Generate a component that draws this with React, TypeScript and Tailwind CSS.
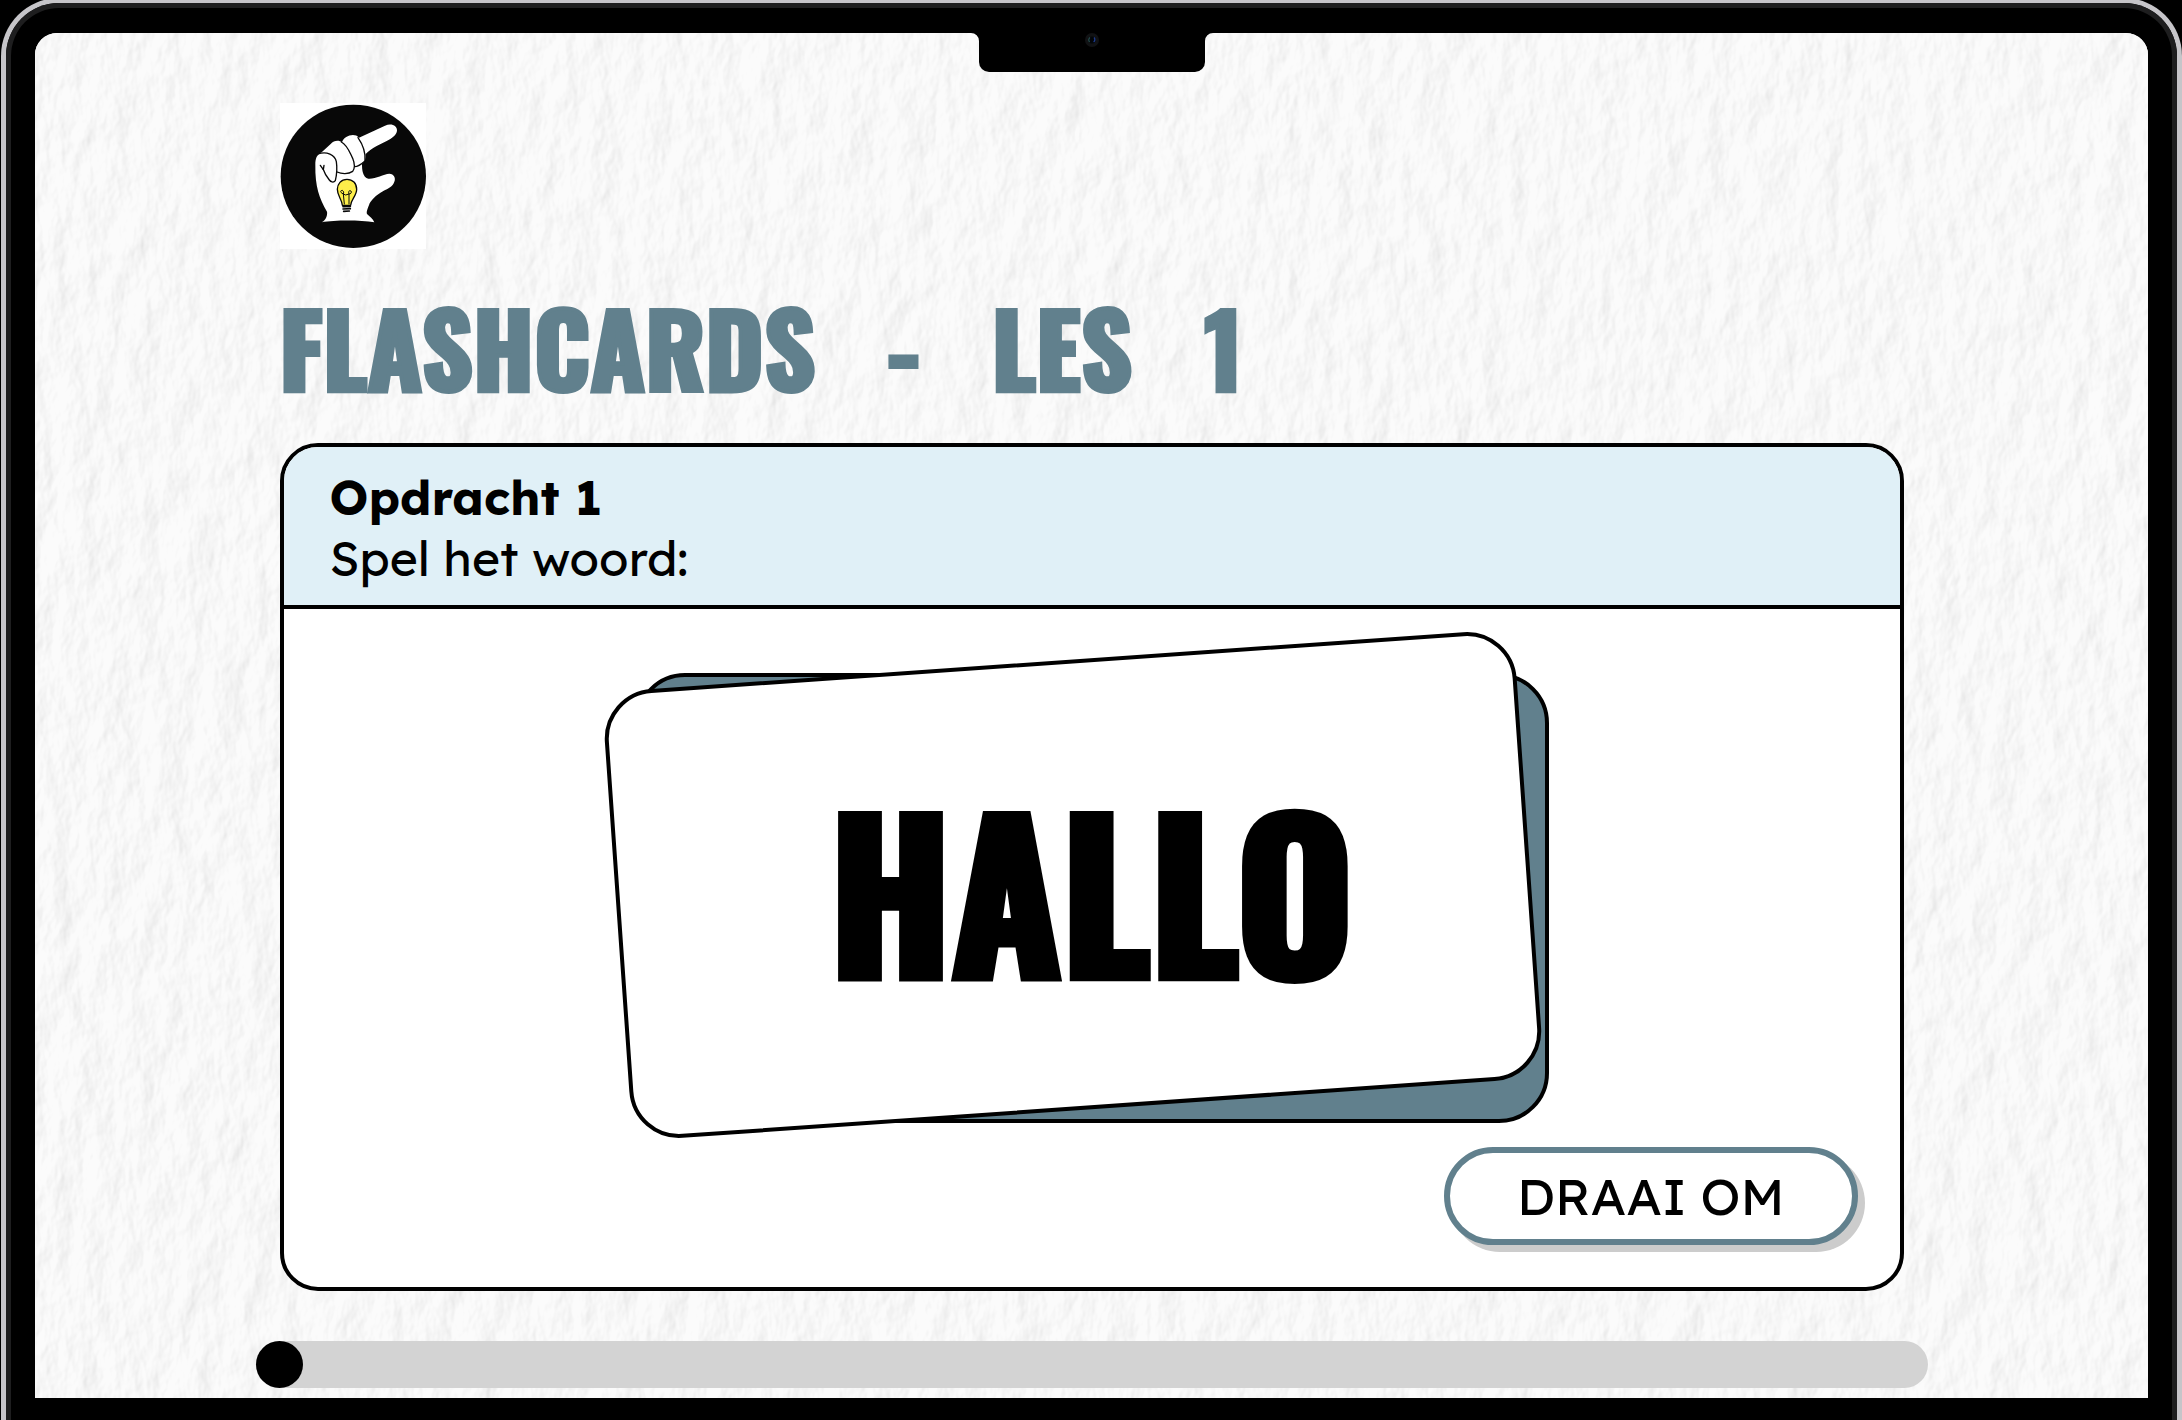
import React, { useState } from "react";

function PaperTexture() {
  return (
    <svg className="absolute inset-0 h-full w-full" aria-hidden="true">
      <filter id="paper" x="0" y="0" width="100%" height="100%" colorInterpolationFilters="sRGB">
        <feTurbulence type="fractalNoise" baseFrequency="0.035 0.02" numOctaves="4" seed="8" result="noise" />
        <feDiffuseLighting in="noise" lightingColor="#ffffff" surfaceScale="2" diffuseConstant="1.12">
          <feDistantLight azimuth="30" elevation="60" />
        </feDiffuseLighting>
      </filter>
      <rect width="100%" height="100%" fill="#f9f9f9" />
      <rect width="100%" height="100%" filter="url(#paper)" opacity="0.36" />
    </svg>
  );
}

function Logo() {
  return (
    <svg className="block h-[146px] w-[146px] bg-white" viewBox="60 39 438 438" role="img" aria-label="Logo">
      <ellipse cx="280" cy="259" rx="218" ry="215" fill="#080808" />
      <path
        fill="#fff"
        d="M185 397C198 390 203 375 201 365C178 325 165 290 166 225C166 205 170 195 185 187L212 162C222 150 238 150 246 157C252 138 283 127 297 143L375 107C395 98 412 108 411 122C410 135 395 145 380 153L350 168C335 176 325 184 317 192C318 205 315 215 306 222C306 240 308 262 325 266C345 268 370 252 388 251C402 251 408 265 403 275C398 290 385 295 370 303C345 317 335 330 329 340C325 352 318 365 321 372C330 380 338 386 343 397C300 390 225 390 185 397Z"
      />
      <g fill="none" stroke="#080808" strokeWidth="4" strokeLinecap="round" strokeLinejoin="round">
        <path d="M294 143C308 163 317 190 315 213C305 222 295 230 284 230" />
        <path d="M244 156C262 165 268 185 278 205C284 220 285 235 278 244C265 253 245 252 231 246" />
        <path d="M174 192C200 182 225 195 229 215C232 235 230 255 226 272C220 280 212 275 208 270C200 260 193 248 189 236" />
        <path d="M181 226L190 239L192 226" />
        <path
          fill="#fdee4a"
          d="M261 268C243 268 232 282 232 298C232 318 246 328 247 346L272 346C273 328 290 318 290 298C290 280 278 268 261 268Z"
        />
        <path strokeWidth="3" d="M253 342L250 312C240 308 240 301 247 301C251 304 252 308 250 312L257 315L267 312C264 304 268 300 273 303C276 308 272 312 267 312L267 342" />
        <path strokeWidth="5" d="M249 350L271 349M249 357L271 356M251 364L268 363" />
      </g>
    </svg>
  );
}

function Notch() {
  return (
    <div className="absolute left-1/2 top-0 h-[39px] w-[226px] -translate-x-1/2 rounded-b-[10px] bg-black">
      <svg className="absolute -left-2 top-0 h-2 w-2" viewBox="0 0 8 8" aria-hidden="true">
        <path d="M0 0H8V8A8 8 0 0 0 0 0Z" fill="#000" />
      </svg>
      <svg className="absolute -right-2 top-0 h-2 w-2" viewBox="0 0 8 8" aria-hidden="true">
        <path d="M8 0H0V8A8 8 0 0 1 8 0Z" fill="#000" />
      </svg>
      <svg className="mx-auto block h-[14px] w-[14px]" viewBox="0 0 14 14" aria-hidden="true">
        <circle cx="7" cy="7" r="7" fill="#111214" />
        <circle cx="7" cy="7" r="3.6" fill="#030508" />
        <path d="M5 4.5A3 3 0 0 0 4.6 9" stroke="#27504f" strokeWidth="1.2" fill="none" />
        <path d="M9 4.5A3 3 0 0 1 8.6 9" stroke="#1c3a8c" strokeWidth="1.4" fill="none" />
      </svg>
    </div>
  );
}

const words = ["HALLO"];

export default function App() {
  const [turned, setTurned] = useState(false);
  const [progress, setProgress] = useState(0);

  return (
    <div className="overflow-hidden bg-black pl-px font-['Lexend','Open_Sans',sans-serif] text-black">
      <div className="-mt-0.5 rounded-t-[58px] border-x-[5px] border-t-[5px] border-[#c6c5c9] bg-black">
        <div className="rounded-t-[53px] border-x-[5px] border-t-[5px] border-[#1e1e1f] bg-black px-6 pb-[22px] pt-[25px]">
          <main className="relative overflow-hidden rounded-t-[22px] bg-[#f9f9f9] pb-[10px]">
            <PaperTexture />
            <Notch />
            <div className="relative mx-auto w-full max-w-[1624px] pt-[70px]">
              <Logo />
              <h1 className="flex h-[194px] items-center gap-[72px] font-['Oswald','Open_Sans_Condensed','Roboto_Condensed',sans-serif] text-[100px] leading-none font-bold text-[#61808d] [-webkit-text-stroke:4px_#61808d]">
                <span>FLASHCARDS </span>
                <span>- </span>
                <span>LES </span>
                <span>1</span>
              </h1>

              <section className="overflow-hidden rounded-[38px] border-4 border-black bg-white">
                <header className="border-b-4 border-black bg-[#e0f0f7] px-[46px] pb-4 pt-5 text-[48px] leading-[61px]">
                  <h2 className="font-bold">Opdracht 1</h2>
                  <p>Spel het woord:</p>
                </header>
                <div className="flex flex-col px-[42px] pb-[42px] pt-16">
                  <div className="relative flex h-[450px] w-full max-w-[914px] items-center justify-center self-center rounded-[50px] border-4 border-black bg-[#61808d]">
                    <div className="absolute -inset-1 -translate-x-[19px] -translate-y-[13px] -rotate-[4deg] rounded-[50px] border-4 border-black bg-white" />
                    <p className="relative pb-5 font-['Oswald','Open_Sans_Condensed','Roboto_Condensed',sans-serif] text-[200px] leading-none font-bold [-webkit-text-stroke:8px_black]">
                      {words[0]}
                    </p>
                  </div>
                  <button
                    type="button"
                    aria-pressed={turned}
                    onClick={() => setTurned(!turned)}
                    className="mt-6 self-end rounded-full border-[6px] border-[#61808d] bg-white px-[67px] py-3 text-[51px] leading-[62px] shadow-[7px_7px_0_#cccccc]"
                  >
                    DRAAI OM
                  </button>
                </div>
              </section>

              <div className="-mx-6 mt-[50px]">
                <input
                  type="range"
                  min="0"
                  max="10"
                  value={progress}
                  onChange={(e) => setProgress(Number(e.target.value))}
                  aria-label="Voortgang"
                  className="block h-[47px] w-full appearance-none rounded-full bg-[#d3d3d3] [&::-webkit-slider-thumb]:h-[47px] [&::-webkit-slider-thumb]:w-[47px] [&::-webkit-slider-thumb]:appearance-none [&::-webkit-slider-thumb]:rounded-full [&::-webkit-slider-thumb]:bg-black"
                />
              </div>
            </div>
          </main>
        </div>
      </div>
    </div>
  );
}
